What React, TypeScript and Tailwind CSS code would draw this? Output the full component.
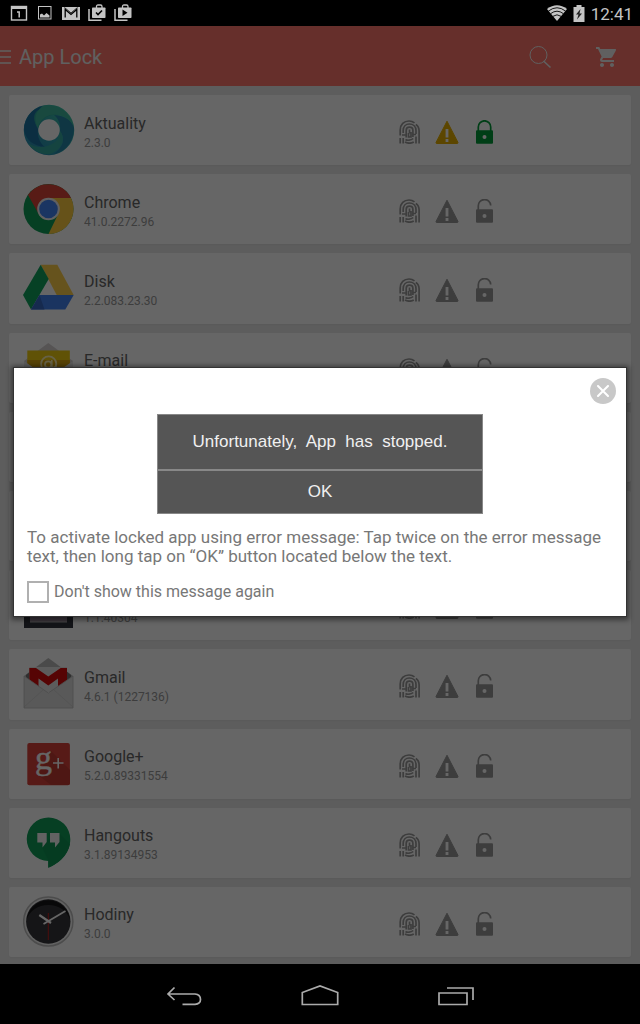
import { useState } from 'react'
import type { ReactNode } from 'react'
import { MdShoppingCart } from 'react-icons/md'

type AppEntry = {
  name: string
  version: string
  icon: ReactNode
  locked?: boolean
}

function NewsIcon() {
  return (
    <svg viewBox="0 0 52 52" className="size-[52px]">
      <defs>
        <linearGradient id="news-ring" x1="1" y1="0" x2="0" y2="1">
          <stop offset="0" stopColor="#3fc0a4" />
          <stop offset="0.5" stopColor="#2fa5b0" />
          <stop offset="1" stopColor="#2a8fb4" />
        </linearGradient>
      </defs>
      <circle cx="26" cy="26" r="18" fill="none" stroke="url(#news-ring)" strokeWidth="14.5" />
      <path d="M1 26C1 14 9 4 20 2C12 10 10 17 15 25C14 33 17 39 22 43C10 42 3 36 1 26Z" fill="#1d74a4" />
      <path d="M14 7C23 1 33 4 39 11C30 9 19 12 15 24C10 17 10 11 14 7Z" fill="#2fa79c" />
      <path d="M51 24C51 38 42 48 31 50C40 43 43 35 37 27C38 20 35 14 31 11C42 12 49 16 51 24Z" fill="#2687a8" />
      <path d="M20 2C34-1 47 8 50 21C45 12 36 9 27 11C20 13 16 18 15 24C10 15 13 7 20 2Z" fill="#3fb79d" />
      <path d="M37 27C43 35 39 46 27 50C18 51 9 46 5 39C12 44 22 44 29 40C35 37 37 32 37 27Z" fill="#36aaa0" />
    </svg>
  )
}

function ChromeIcon() {
  return (
    <svg viewBox="0 0 52 52" className="size-[52px]">
      <circle cx="25.5" cy="26" r="25" fill="#0f9d58" />
      <path d="M25.5 15H48A25 25 0 0 1 25.5 51L35 31.5Z" fill="#ffcd40" />
      <path d="M5 12A25 25 0 0 1 48 15H25.5L16 31.5Z" fill="#db4437" />
      <circle cx="25.5" cy="26" r="11.3" fill="#f1f1f1" />
      <circle cx="25.5" cy="26" r="9.3" fill="#4285f4" />
    </svg>
  )
}

function DriveIcon() {
  return (
    <svg viewBox="0 0 52 52" className="size-[52px]">
      <path d="M17.7 2.8H34.3L50.7 33H33.7Z" fill="#ffcf4a" />
      <path d="M17.7 2.8L25.7 17L8 47.5L0 33Z" fill="#11a25e" />
      <path d="M16.5 33H50.7L42.3 47.5H8Z" fill="#4382f0" />
      <path d="M16.5 33L21.5 47.5H8Z" fill="#3769c4" />
    </svg>
  )
}

function EmailIcon() {
  return (
    <svg viewBox="0 0 52 52" className="size-[52px]">
      <path d="M25.3 1L50 19V49H1V19Z" fill="#d8d2d2" />
      <rect x="4.3" y="8.5" width="42.5" height="30" fill="#f0cc10" />
      <rect x="4.3" y="18" width="42.5" height="20" fill="#dda810" />
      <circle cx="25.7" cy="22" r="7.6" fill="none" stroke="#fff3b0" strokeWidth="1.8" />
      <circle cx="25.2" cy="22.5" r="3.2" fill="none" stroke="#fff3b0" strokeWidth="1.8" />
      <path d="M28.8 18V24C29 26.5 33 26 33.3 22" fill="none" stroke="#fff3b0" strokeWidth="1.6" />
      <path d="M1 19L25.3 36L50 19V49H1Z" fill="#e8e8e8" />
    </svg>
  )
}

function FilmIcon() {
  return (
    <svg viewBox="0 0 52 52" className="size-[52px]">
      <rect x="1" y="2" width="49" height="47" fill="#30343c" />
      <rect x="7" y="8" width="37" height="35" fill="#8e7f92" />
      <path d="M7 43H44" stroke="#a9a9a9" />
    </svg>
  )
}

function GmailIcon() {
  return (
    <svg viewBox="0 0 52 52" className="size-[52px]">
      <path d="M25.3 0L50 18V30H1V18Z" fill="#b9b9b9" />
      <path d="M3 17L8 13V32H3ZM48 17L43 13V32H48Z" fill="#777" />
      <path d="M6.3 9H44V34H6.3Z" fill="#e6e6e6" />
      <path d="M6.3 10H13L25.3 18.5L37.7 10H44V34H35V20.5L25.3 27.5L15.5 20.5V34H6.3Z" fill="#d80a0a" />
      <path d="M1 18L25.3 35L50 18V50H1Z" fill="#dedede" />
      <path d="M1 49L20 32M50 49L31 32" stroke="#d2d2d2" />
      <path d="M1 18L25.3 35L50 18V50H1Z" fill="none" stroke="#bdbdbd" strokeWidth="0.8" />
    </svg>
  )
}

function GooglePlusIcon() {
  return (
    <svg viewBox="0 0 52 52" className="size-[52px] overflow-visible">
      <rect x="4.3" y="5" width="42.6" height="42.3" rx="2" fill="#d9433a" />
      <path d="M28 13L47 32V45Q47 47 45 47H28L15 37Z" fill="#c43a32" />
      <text
        x="12"
        y="31"
        fontSize="34"
        fill="#fff"
        stroke="#fff"
        strokeWidth="0.4"
        fontFamily="'Liberation Serif', serif"
      >
        g
      </text>
      <path d="M30 25H40.5M35.2 20V30.5" stroke="#fff" strokeWidth="1.6" />
    </svg>
  )
}

function HangoutsIcon() {
  return (
    <svg viewBox="0 0 52 52" className="size-[52px]">
      <path
        d="M25.6 0.5A21.7 21.7 0 0 1 47.3 22.2C47.3 35 37 46 25.3 50.7V43.9A21.7 21.7 0 0 1 25.6 0.5Z"
        fill="#0f9d58"
      />
      <path d="M36 16L47 27C45 39 34 47.5 25.3 50.7V43L18 28Z" fill="#0e9453" />
      <path d="M14.3 16H23.7V25L19.5 30.5V25.5H14.3ZM27 16H36.5V25L32 30.5V25.5H27Z" fill="#f4f4f4" />
    </svg>
  )
}

function ClockIcon() {
  return (
    <svg viewBox="0 0 52 52" className="size-[52px]">
      <circle cx="25.3" cy="25.5" r="24.6" fill="#f5f5f5" stroke="#bdbdbd" strokeWidth="1.5" />
      <circle cx="25.3" cy="25.5" r="22.2" fill="#36363a" />
      <path d="M3.6 24A21.8 21.8 0 0 1 47 24A22.5 20.5 0 0 0 3.6 24Z" fill="#161618" />
      <path d="M25.3 17V44" stroke="#c02020" strokeWidth="1" />
      <path d="M20.5 28L42.5 15" stroke="#fff" strokeWidth="1.8" />
      <path d="M16.3 19L28 27" stroke="#fff" strokeWidth="2.2" />
    </svg>
  )
}

function FingerprintIcon() {
  return (
    <svg viewBox="0 0 24 24" className="size-6" fill="none" stroke="currentColor" strokeWidth="1.7">
      <path d="M2.2 15.5V10C2.2 4.5 6 1 11 1C13 1 15 1.6 16.5 2.8" />
      <path d="M17.8 4.5C20.2 6 21.1 8.5 21.1 11V23.5" />
      <path d="M5.2 13V10.5C5.2 6.5 7.8 4 11.3 4C15.3 4 18 6.8 18 10.5V14M18 16.5V23.5" />
      <path d="M2.2 18V23.5M5.2 18V23.5" />
      <path d="M8.2 17.5V10.5C8.2 8.5 9.5 7.2 11.5 7.2C13.7 7.2 14.9 8.6 14.9 10.5V17" />
      <path d="M11.5 9.5V13.5M10.5 13V17H13V12M4 15H8M15 14.5H18" />
      <path d="M7.5 19.5C9 20.6 13 20.6 15.2 18.5M7 22C9.5 23.6 13.5 23.6 15.8 22" />
    </svg>
  )
}

function WarningIcon() {
  return (
    <svg viewBox="0 0 24 24" className="size-6">
      <path
        d="M12 1.2L23 22.5Q23.2 23.5 22 23.5H2Q0.8 23.5 1 22.5Z"
        fill="currentColor"
        stroke="currentColor"
        strokeLinejoin="round"
      />
      <path d="M12 9V17.5M12 19V22" stroke="#fff" strokeWidth="2.8" />
    </svg>
  )
}

function LockIcon({ locked }: { locked?: boolean }) {
  return (
    <svg viewBox="0 0 24 24" className="size-6">
      <path
        d={locked ? 'M6.3 11V7A6.2 6.2 0 0 1 18.7 7V11' : 'M6.3 11V7A6.2 6.2 0 0 1 18.7 6.5'}
        fill="none"
        stroke="currentColor"
        strokeWidth="1.7"
      />
      <rect x="4" y="10.3" width="17" height="13.5" rx="1" fill="currentColor" />
      <circle cx="12.5" cy="17" r="2" fill="#fff" />
    </svg>
  )
}

const apps: AppEntry[] = [
  { name: 'Aktuality', version: '2.3.0', icon: <NewsIcon />, locked: true },
  { name: 'Chrome', version: '41.0.2272.96', icon: <ChromeIcon /> },
  { name: 'Disk', version: '2.2.083.23.30', icon: <DriveIcon /> },
  { name: 'E-mail', version: '', icon: <EmailIcon /> },
  { name: '', version: '', icon: null },
  { name: '', version: '', icon: null },
  { name: '', version: '1.1.40304', icon: <FilmIcon /> },
  { name: 'Gmail', version: '4.6.1 (1227136)', icon: <GmailIcon /> },
  { name: 'Google+', version: '5.2.0.89331554', icon: <GooglePlusIcon /> },
  { name: 'Hangouts', version: '3.1.89134953', icon: <HangoutsIcon /> },
  { name: 'Hodiny', version: '3.0.0', icon: <ClockIcon /> },
]

function AppRow({ app }: { app: AppEntry }) {
  return (
    <li className="flex min-h-[70px] flex-1 items-center rounded-xs bg-white pl-[14px] shadow-xs">
      <div className="size-[52px] shrink-0">{app.icon}</div>
      <div className="ml-[9px] min-w-0 flex-1 pt-[5px]">
        <div className="h-5 truncate text-base leading-5 text-[#666]">{app.name}</div>
        <div className="h-[18px] truncate text-xs leading-[18px] text-[#999]">{app.version}</div>
      </div>
      <div className="mt-1 mr-[135px] flex shrink-0 gap-[13px] text-[#999]">
        <button type="button" aria-label="Fingerprint">
          <FingerprintIcon />
        </button>
        <button type="button" aria-label="Error message" className={app.locked ? 'text-[#e6b000]' : ''}>
          <WarningIcon />
        </button>
        <button type="button" aria-label="Lock" className={app.locked ? 'text-[#009c38]' : ''}>
          <LockIcon locked={app.locked} />
        </button>
      </div>
    </li>
  )
}

function StatusBar() {
  return (
    <div className="flex h-[26px] shrink-0 items-center justify-between bg-black pr-[7px] pl-[10px] text-[#c4c4c4]">
      <div className="flex items-center gap-2">
        <svg viewBox="0 0 18 18" className="size-[18px]" fill="none" stroke="currentColor">
          <rect x="1.5" y="2.5" width="15" height="13.5" strokeWidth="1.4" />
          <path d="M1 3.5H17" strokeWidth="3" />
          <path d="M7 8H9.2V13.5" strokeWidth="1.5" />
        </svg>
        <svg viewBox="0 0 18 18" className="size-[18px]">
          <rect x="2.5" y="2.5" width="12.5" height="12.5" fill="none" stroke="currentColor" />
          <path d="M4 13.5V10.5L6 9.5L8 11.5L10.5 9L13.5 11.5V13.5Z" fill="currentColor" />
        </svg>
        <svg viewBox="0 0 18 18" className="size-[18px]">
          <path d="M0 3H18V16H0Z" fill="currentColor" />
          <path d="M3.2 13.5V5.5L9 10.5L14.8 5.5V13.5" fill="none" stroke="#000" strokeWidth="1.3" />
          <path d="M2.5 3.5L9 9L15.5 3.5" fill="none" stroke="#000" strokeWidth="0.8" />
        </svg>
        <svg viewBox="0 0 18 18" className="size-[18px]">
          <path d="M1 5V16.3H13.5" fill="none" stroke="currentColor" strokeWidth="1.5" />
          <path d="M8.5 4V2.5Q8.5 1 10 1H12.5Q14 1 14 2.5V4" fill="none" stroke="currentColor" strokeWidth="1.3" />
          <rect x="4" y="3.5" width="13.5" height="10.5" rx="0.8" fill="currentColor" />
          <path d="M8 8.5L10 10.5L14 6.5" fill="none" stroke="#000" strokeWidth="1.6" />
        </svg>
        <svg viewBox="0 0 18 18" className="size-[18px]">
          <path d="M1 5V16.3H13.5" fill="none" stroke="currentColor" strokeWidth="1.5" />
          <path d="M8.5 4V2.5Q8.5 1 10 1H12.5Q14 1 14 2.5V4" fill="none" stroke="currentColor" strokeWidth="1.3" />
          <rect x="4" y="3.5" width="13.5" height="10.5" rx="0.8" fill="currentColor" />
          <path d="M8.5 5.5L13.5 8.7L8.5 12Z" fill="#000" />
        </svg>
      </div>
      <div className="flex items-center">
        <svg viewBox="0 0 20 16" className="mr-[6px] h-4 w-5">
          <path d="M0 4Q10-3.5 20 4L10 16Z" fill="currentColor" />
          <path
            d="M1.5 6Q10-0.5 18.5 6M3.7 8.6Q10 3.8 16.3 8.6M6 11.3Q10 8.3 14 11.3"
            fill="none"
            stroke="#000"
            strokeWidth="0.9"
          />
        </svg>
        <svg viewBox="0 0 12 17" className="mr-[6px] h-[17px] w-3">
          <path d="M3.5 0H8.5V2H11.5V17H0.5V2H3.5Z" fill="currentColor" />
          <path d="M7.5 4L3 9.5H5.5L4 14.5L9 8.5H6.5Z" fill="#222" />
        </svg>
        <span className="pt-[2px] text-[17px] leading-6">12:41</span>
      </div>
    </div>
  )
}

function Header() {
  return (
    <header className="flex h-[60px] shrink-0 items-center justify-between bg-[#ff776b] pt-[2px] pr-[21px] text-[#f0f0f0]">
      <div className="flex items-center gap-2">
        <button type="button" aria-label="Menu">
          <svg viewBox="0 0 11 14" className="h-[14px] w-[11px]" stroke="currentColor" strokeWidth="1.5">
            <path d="M0 1H11M0 7H11M0 13H11" />
          </svg>
        </button>
        <h1 className="text-xl leading-6">App Lock</h1>
      </div>
      <div className="flex items-center gap-[43px]">
        <button type="button" aria-label="Search">
          <svg viewBox="0 0 24 24" className="size-6" fill="none" stroke="currentColor">
            <circle cx="10.5" cy="10" r="8.5" />
            <path d="M15.5 16L22.5 22.5" strokeWidth="1.6" />
          </svg>
        </button>
        <button type="button" aria-label="Cart">
          <MdShoppingCart className="size-6" />
        </button>
      </div>
    </header>
  )
}

function HintDialog({ onClose }: { onClose: () => void }) {
  const [dontShow, setDontShow] = useState(false)

  return (
    <div className="absolute inset-0 flex items-center justify-center bg-black/60 px-[14px] pb-[6px]">
      <div
        role="dialog"
        aria-label="App Lock"
        className="relative w-full bg-white px-[13px] pt-[46px] pb-3 text-[#777] shadow-[0_1px_5px_3px_rgba(0,0,0,0.45)] outline outline-[#333]"
      >
        <button
          type="button"
          aria-label="Close"
          onClick={onClose}
          className="absolute top-[10px] right-[10px] flex size-[26px] items-center justify-center rounded-full bg-[#c8c8c8]"
        >
          <svg viewBox="0 0 12 12" className="size-3" stroke="#fff" strokeWidth="2" strokeLinecap="round">
            <path d="M1 1L11 11M11 1L1 11" />
          </svg>
        </button>
        <div className="mx-auto w-[326px] max-w-full border border-[#888] bg-[#555] text-center font-['Liberation_Sans',Arial,sans-serif] text-[17px] text-[#f0f0f0]">
          <p className="border-b-2 border-[#888] py-[15px] leading-6 whitespace-pre">
            {'Unfortunately,  App  has  stopped.'}
          </p>
          <button type="button" onClick={onClose} className="block w-full py-[9px] leading-6">
            OK
          </button>
        </div>
        <p className="mt-[14px] text-[17px] leading-[19px]">
          To activate locked app using error message: Tap twice on the error message text, then long tap on “OK” button
          located below the text.
        </p>
        <label className="mt-[14px] flex items-center gap-[5px] text-base leading-6">
          <input
            type="checkbox"
            checked={dontShow}
            onChange={(e) => setDontShow(e.target.checked)}
            className="size-[22px] appearance-none border-2 border-[#b0b0b0] bg-white checked:bg-[#b0b0b0]"
          />
          Don't show this message again
        </label>
      </div>
    </div>
  )
}

function NavBar() {
  return (
    <nav className="flex h-[60px] shrink-0 items-center justify-center bg-black text-[#aaa]">
      <button type="button" aria-label="Back" className="flex w-[136px] justify-center">
        <svg viewBox="0 0 36 24" className="h-6 w-9" fill="none" stroke="currentColor" strokeWidth="1.7">
          <path d="M8.5 5.5L2 12L8.5 18M2 12H29Q34.5 12.5 34.5 17.5Q34.5 22 29 22.3H16.5" />
        </svg>
      </button>
      <button type="button" aria-label="Home" className="flex w-[136px] justify-center">
        <svg viewBox="0 0 40 24" className="h-6 w-10" fill="none" stroke="currentColor" strokeWidth="1.7">
          <path d="M2.3 22.5V10.5L20 4L37.7 10.5V22.5Z" />
        </svg>
      </button>
      <button type="button" aria-label="Recent apps" className="flex w-[136px] justify-center">
        <svg viewBox="0 0 36 24" className="h-6 w-9" fill="none" stroke="currentColor" strokeWidth="1.7">
          <path d="M1 11H29V22.5H1ZM9 6H35V18" />
        </svg>
      </button>
    </nav>
  )
}

export default function App() {
  const [open, setOpen] = useState(true)

  return (
    <div className="flex min-h-screen flex-col bg-black font-[Roboto,sans-serif]">
      <StatusBar />
      <main className="relative flex flex-1 flex-col bg-[#e9e9e9]">
        <Header />
        <ul className="flex flex-1 flex-col gap-[9px] px-[9px] pt-[9px] pb-[7px]">
          {apps.map((app, i) => (
            <AppRow key={i} app={app} />
          ))}
        </ul>
        {open && <HintDialog onClose={() => setOpen(false)} />}
      </main>
      <NavBar />
    </div>
  )
}
